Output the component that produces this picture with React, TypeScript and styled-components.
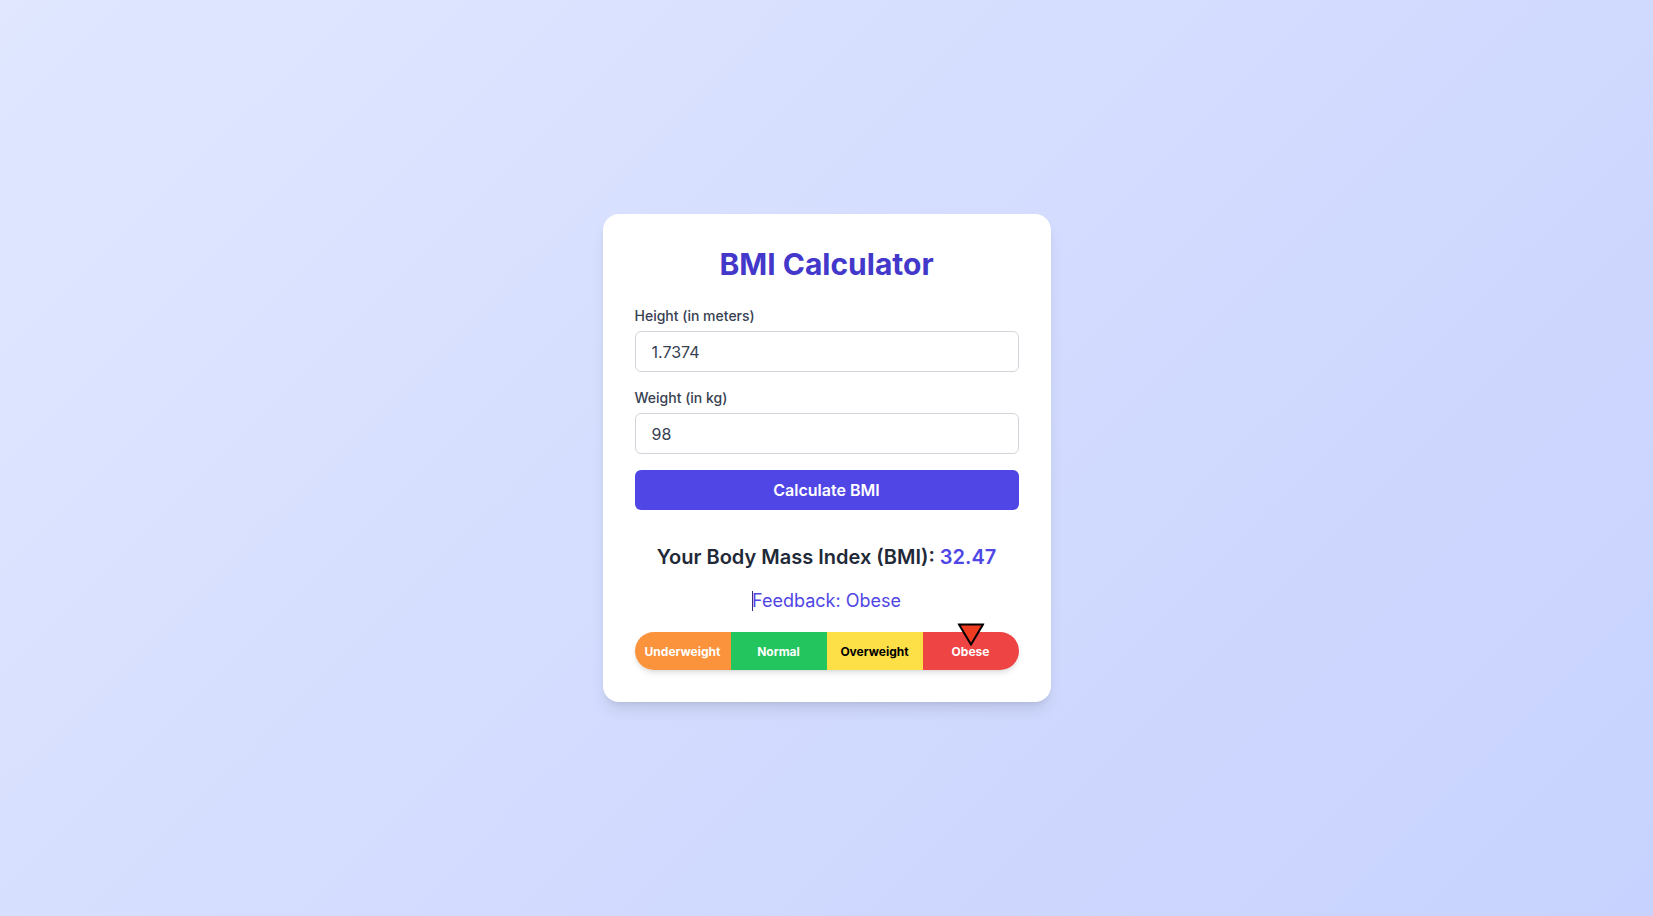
import styled, { createGlobalStyle } from "styled-components";

const GlobalStyle = createGlobalStyle`
  * {
    box-sizing: border-box;
  }
  body {
    margin: 0;
    font-family: Inter, "Noto Sans", sans-serif;
  }
`;

const Page = styled.div`
  min-height: 100vh;
  display: flex;
  align-items: center;
  justify-content: center;
  background: linear-gradient(135deg, #e0e7ff 0%, #c7d2fe 100%);
`;

const Card = styled.div`
  width: 448px;
  padding: 32px;
  background: #fff;
  border-radius: 16px;
  box-shadow: 0 10px 15px -3px rgba(0, 0, 0, 0.1), 0 4px 6px -4px rgba(0, 0, 0, 0.1);
  display: flex;
  flex-direction: column;
`;

const Title = styled.h1`
  margin: 0 0 24px;
  text-align: center;
  font-size: 30px;
  line-height: 36px;
  font-weight: 700;
  color: #4338ca;
`;

const Field = styled.div`
  display: flex;
  flex-direction: column;
  gap: 5px;
  margin-bottom: 16px;
`;

const Label = styled.label`
  font-size: 14px;
  line-height: 20px;
  font-weight: 500;
  color: #374151;
`;

const Input = styled.input`
  height: 41px;
  width: 100%;
  padding: 0 16px;
  border: 1px solid #d1d5db;
  border-radius: 6px;
  font-family: inherit;
  font-size: 16px;
  color: #374151;
  outline: none;
`;

const Button = styled.button`
  height: 40px;
  width: 100%;
  border: none;
  border-radius: 6px;
  background: #4f46e5;
  color: #fff;
  font-family: inherit;
  font-size: 16px;
  font-weight: 600;
  cursor: pointer;
`;

const Result = styled.p`
  margin: 33px 0 16px;
  text-align: center;
  font-size: 20px;
  line-height: 28px;
  font-weight: 600;
  color: #1f2937;
`;

const Value = styled.span`
  color: #4f46e5;
`;

const Feedback = styled.p`
  margin: 0 0 17px;
  text-align: center;
  font-size: 18px;
  line-height: 28px;
  color: #4f46e5;
`;

const Caret = styled.span`
  display: inline-block;
  width: 1px;
  height: 20px;
  margin-right: -1px;
  vertical-align: -4px;
  background: #312e81;
`;

const Scale = styled.div`
  position: relative;
  display: grid;
  grid-template-columns: repeat(4, 1fr);
  height: 38px;
  border-radius: 999px;
  box-shadow: 0 4px 6px -1px rgba(0, 0, 0, 0.1), 0 2px 4px -2px rgba(0, 0, 0, 0.1);
`;

const Segment = styled.div<{ $bg: string; $fg: string; $first?: boolean; $last?: boolean }>`
  display: flex;
  align-items: center;
  justify-content: center;
  background: ${(p) => p.$bg};
  color: ${(p) => p.$fg};
  font-size: 12px;
  font-weight: 700;
  border-radius: ${(p) => (p.$first ? "999px 0 0 999px" : p.$last ? "0 999px 999px 0" : "0")};
`;

const Marker = styled.svg`
  position: absolute;
  top: -9px;
  width: 27px;
  height: 23px;
  transform: translateX(-50%);
`;

const segments = [
  { name: "Underweight", bg: "#fb923c", fg: "#fff" },
  { name: "Normal", bg: "#22c55e", fg: "#fff" },
  { name: "Overweight", bg: "#fde047", fg: "#000" },
  { name: "Obese", bg: "#ef4444", fg: "#fff" },
];

export default function App() {
  const height = 1.7374;
  const weight = 98;
  const bmi = weight / (height * height);
  // obese band: marker sits at the middle of the last segment
  const markerPos = 87.5;

  return (
    <>
      <GlobalStyle />
      <Page>
        <Card>
          <Title>BMI Calculator</Title>
          <Field>
            <Label>Height (in meters)</Label>
            <Input defaultValue="1.7374" />
          </Field>
          <Field>
            <Label>Weight (in kg)</Label>
            <Input defaultValue="98" />
          </Field>
          <Button>Calculate BMI</Button>
          <Result>
            Your Body Mass Index (BMI): <Value>{bmi.toFixed(2)}</Value>
          </Result>
          <Feedback>
            <Caret />
            Feedback: Obese
          </Feedback>
          <Scale>
            {segments.map((s, i) => (
              <Segment key={s.name} $bg={s.bg} $fg={s.fg} $first={i === 0} $last={i === segments.length - 1}>
                {s.name}
              </Segment>
            ))}
            <Marker viewBox="0 0 27 23" style={{ left: `${markerPos}%` }}>
              <polygon points="1.5,1.5 25.5,1.5 13.5,21.5" fill="#ef3b1f" stroke="#000" strokeWidth="2" />
            </Marker>
          </Scale>
        </Card>
      </Page>
    </>
  );
}
